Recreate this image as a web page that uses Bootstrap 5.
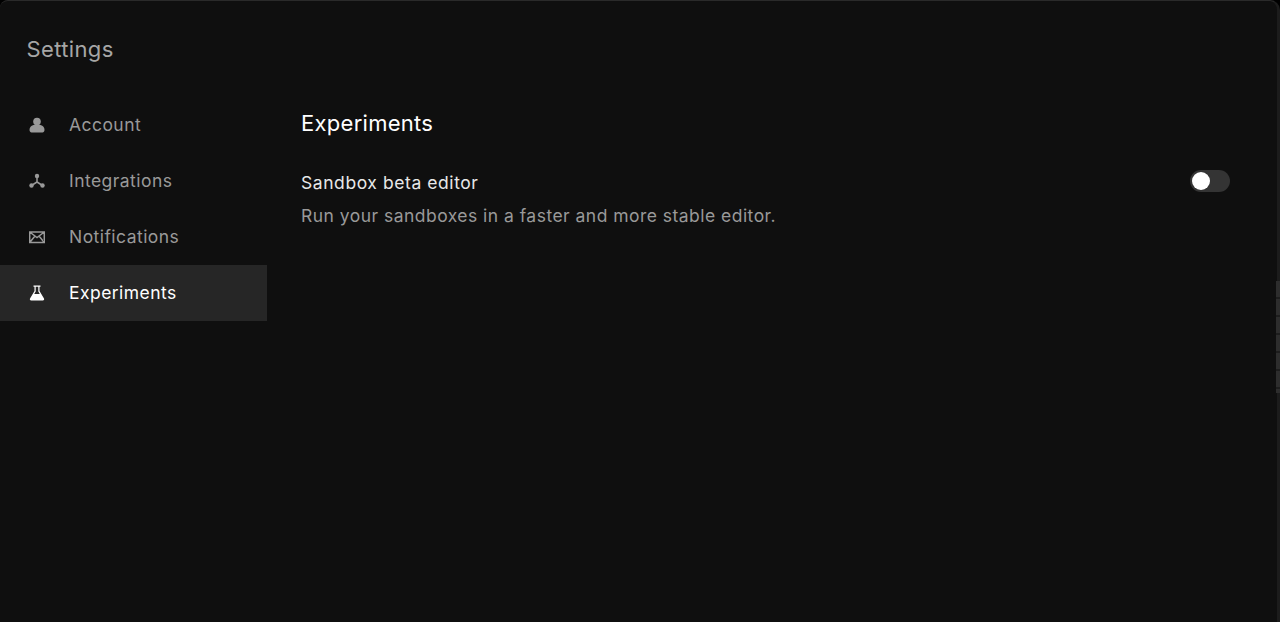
<!doctype html>
<html lang="en"><head><meta charset="utf-8">
<link href="https://cdn.jsdelivr.net/npm/bootstrap@5.3.0/dist/css/bootstrap.min.css" rel="stylesheet">
<style>
html,body{height:100%;background:#000;}
body{font-family:Inter,"Liberation Sans",sans-serif;overflow:hidden;}
.shell{height:622px;background:#0f0f0f;border-top:1px solid #2a2a2a;border-right:3px solid #1c1c1c;border-radius:8px 10px 0 0;position:relative;}
.side{width:267px;flex:none;}
.page-title{font-size:22px;line-height:24px;color:#a6a6a6;font-weight:400;margin:0;padding:36px 0 0 26.500px;height:96px;letter-spacing:.37px;}
.side-item{height:56px;padding-left:29px;gap:24px;color:#999;font-size:17.5px;letter-spacing:.45px;}
.side-item span{position:relative;top:.5px;}
.side-item.on{background:#262626;color:#fff;}
.side-item svg{width:16px;height:16px;flex:none;fill:currentColor;}
.pane{padding:107.500px 47px 0 34px;}
.pane-h{font-size:22px;line-height:28px;color:#fff;font-weight:400;margin:0 0 35.500px;letter-spacing:.28px;}
.exp-name{font-size:17.5px;line-height:22px;color:#e8e8e8;letter-spacing:.57px;}
.exp-desc{font-size:17.5px;line-height:22px;color:#999;margin-top:11px;letter-spacing:.47px;}
.tog{width:40px;height:22px;border-radius:11px;background:#343434;padding:2px;margin-top:-2px;}
.tog-dot{width:18px;height:18px;border-radius:50%;background:#fff;}
.edge{position:absolute;right:-3px;top:280px;width:4px;height:112px;background:repeating-linear-gradient(#2d2d2d 0 16px,#1d1d1d 16px 18px);}
</style></head><body>
<div class="shell d-flex">
<nav class="side">
<h1 class="page-title">Settings</h1>
<div class="side-item d-flex align-items-center"><svg viewBox="0 0 16 16"><circle cx="8" cy="4.500" r="3.800"/><path d="M.5 13c0-4 3.500-5.500 7.500-5.500s7.500 1.500 7.500 5.500c0 1.500-1 2.500-2 2.500H2.500c-1 0-2-1-2-2.500z"/></svg><span>Account</span></div>
<div class="side-item d-flex align-items-center"><svg viewBox="0 0 16 16"><circle cx="8" cy="3" r="2.200"/><circle cx="2.500" cy="12.500" r="2.200"/><circle cx="13.500" cy="12.500" r="2.200"/><path d="M8 3v6L2.500 12.500M8 9l5.500 3.500" fill="none" stroke="currentColor" stroke-width="1.500"/></svg><span>Integrations</span></div>
<div class="side-item d-flex align-items-center"><svg viewBox="0 0 16 16"><path d="M.7 3h14.600v10.500H.7z M.7 3 8 8.500 15.300 3M.7 13.500 6 7M15.300 13.500 10 7" fill="none" stroke="currentColor" stroke-width="1.500"/></svg><span>Notifications</span></div>
<div class="side-item on d-flex align-items-center"><svg viewBox="0 0 16 16"><path d="M4.500 .5h7v1.300h-1v4.200L15 13.500c.5 1-.2 2-1.200 2H2.200c-1 0-1.700-1-1.200-2L5.500 6V1.800h-1zM6.700 1.800v4.700L5.200 9h5.600L9.300 6.500V1.800z" fill-rule="evenodd"/></svg><span>Experiments</span></div>
</nav>
<main class="pane flex-grow-1">
<h2 class="pane-h">Experiments</h2>
<div class="d-flex justify-content-between align-items-start">
<div><div class="exp-name">Sandbox beta editor</div><div class="exp-desc">Run your sandboxes in a faster and more stable editor.</div></div>
<div class="tog"><div class="tog-dot"></div></div>
</div>
</main>
<div class="edge"></div>
</div>
</body></html>
